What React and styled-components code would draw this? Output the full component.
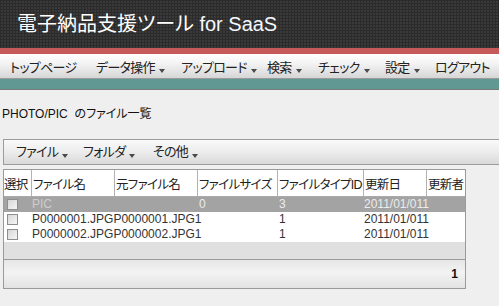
import React from "react";
import styled, { createGlobalStyle } from "styled-components";

const Global = createGlobalStyle`
  html, body { margin: 0; padding: 0; }
  body {
    background: #efefef;
    overflow: hidden;
    font-family: "Liberation Sans", "Noto Sans CJK JP", sans-serif;
    font-feature-settings: "palt";
    color: #222;
  }
`;

const Page = styled.div`
  width: 499px;
  height: 306px;
  overflow: hidden;
`;

const Header = styled.header`
  height: 48px;
  box-sizing: border-box;
  padding: 9px 0 0 17px;
  background-color: #3a3a3a;
  background-image:
    linear-gradient(#2b2b2b 1px, transparent 1px),
    linear-gradient(90deg, #2b2b2b 1px, transparent 1px);
  background-size: 3px 3px;
`;

const Title = styled.h1`
  margin: 0;
  font-weight: normal;
  font-size: 20px;
  line-height: 30px;
  color: #fff;
`;

const Latin = styled.span`
  font-family: "Liberation Sans", Arial, sans-serif;
  color: #f4f8ff;
`;

const Stripe = styled.div`
  height: ${(p) => p.$h}px;
  background: ${(p) => p.$color};
  border-bottom: ${(p) => (p.$bottom ? `1px solid ${p.$bottom}` : "none")};
`;

const Nav = styled.nav`
  display: flex;
  align-items: center;
  height: 25px;
  box-sizing: border-box;
  padding: 3px 0 0 10px;
  background: linear-gradient(#ffffff, #f3f3f3 40%, #d6d6d6);
  border-bottom: 1px solid #9a9a9a;
`;

const NavItem = styled.div`
  display: flex;
  align-items: center;
  flex: none;
  width: ${(p) => (p.$w ? `${p.$w}px` : "auto")};
  font-size: 13px;
  line-height: 16px;
  letter-spacing: -0.7px;
  color: #222;
  white-space: nowrap;
`;

const Arrow = styled.span`
  display: inline-block;
  width: 0;
  height: 0;
  margin: 7px 0 0 4px;
  border-left: 3.5px solid transparent;
  border-right: 3.5px solid transparent;
  border-top: 4px solid #4a4a4a;
`;

const Content = styled.main`
  padding: 0 0 0 2px;
`;

const PageTitle = styled.div`
  margin-top: 16px;
  font-size: 12px;
  line-height: 16px;
  color: #111;
`;

const Toolbar = styled.div`
  display: flex;
  align-items: center;
  margin: 17px 0 0 1px;
  width: 520px;
  height: 26px;
  box-sizing: border-box;
  padding: 0 0 0 12px;
  border: 1px solid #9c9c9c;
  border-right: none;
  background: linear-gradient(#fafafa, #ececec 50%, #d9d9d9);
`;

const ToolItem = styled(NavItem)`
  color: #222;
`;

const Grid = styled.div`
  margin: 4px 0 0 1px;
  width: 463px;
  box-sizing: border-box;
  border: 1px solid #9a9a9a;
  background: #e0e0e0;
`;

const cols = "28px 83px 83px 80px 86px 63px 38px";

const HeaderRow = styled.div`
  display: grid;
  grid-template-columns: ${cols};
  height: 26px;
  border-bottom: 1px solid #aaaaaa;
  background: #fff;
`;

const HeaderCell = styled.div`
  display: flex;
  align-items: center;
  box-sizing: border-box;
  padding-left: ${(p) => p.$pad ?? 1}px;
  border-right: ${(p) => (p.$last ? "none" : "1px solid #b2b2b2")};
  font-size: 12.5px;
  letter-spacing: -0.7px;
  color: #222;
  white-space: nowrap;
  overflow: hidden;
`;

const Body = styled.div`
  height: 62px;
`;

const Row = styled.div`
  display: grid;
  grid-template-columns: ${cols};
  height: 15px;
  align-items: center;
  font-size: 12px;
  line-height: 15px;
  background: ${(p) => (p.$folder ? "#a3a3a3" : "#ffffff")};
  color: ${(p) => (p.$folder ? "#ececec" : "#333")};
`;

const Cell = styled.div`
  padding-left: ${(p) => p.$pad ?? 1}px;
  white-space: nowrap;
  grid-column: ${(p) => (p.$span ? `span ${p.$span}` : "auto")};
  color: ${(p) => p.$color || "inherit"};
`;

const Check = styled.span`
  display: block;
  width: 11px;
  height: 11px;
  margin-left: 2px;
  box-sizing: border-box;
  border: 1px solid #8e8e8e;
  background: linear-gradient(135deg, #d6d6d6, #f7f7f7);
`;

const Pager = styled.div`
  display: flex;
  align-items: center;
  justify-content: flex-end;
  height: 28px;
  padding-right: 7px;
  border-top: 1px solid #9a9a9a;
  background: linear-gradient(#e6e6e6, #f3f3f3 45%, #e2e2e2);
  font-size: 12px;
  font-weight: bold;
  color: #111;
`;

const navItems = [
  { label: "トップページ", w: 86 },
  { label: "データ操作", w: 85, menu: true },
  { label: "アップロード", w: 86, menu: true },
  { label: "検索", w: 51, menu: true },
  { label: "チェック", w: 67, menu: true },
  { label: "設定", w: 50, menu: true },
  { label: "ログアウト" },
];

const toolItems = [
  { label: "ファイル", w: 67 },
  { label: "フォルダ", w: 70 },
  { label: "その他" },
];

const headers = ["選択", "ファイル名", "元ファイル名", "ファイルサイズ", "ファイルタイプID", "更新日", "更新者"];

const files = [
  { name: "P0000001.JPG", orig: "P0000001.JPG", size: "1", type: "1", date: "2011/01/011" },
  { name: "P0000002.JPG", orig: "P0000002.JPG", size: "1", type: "1", date: "2011/01/011" },
];

export default function App() {
  return (
    <Page>
      <Global />
      <Header>
        <Title>
          電子納品支援ツール <Latin>for SaaS</Latin>
        </Title>
      </Header>
      <Stripe $h={6} $color="#c65a5a" />
      <Nav>
        {navItems.map((n) => (
          <NavItem key={n.label} $w={n.w}>
            {n.label}
            {n.menu && <Arrow />}
          </NavItem>
        ))}
      </Nav>
      <Stripe $h={10} $color="#629893" $bottom="#7a7a7a" />
      <Content>
        <PageTitle>PHOTO/PIC&nbsp; のファイル一覧</PageTitle>
        <Toolbar>
          {toolItems.map((t) => (
            <ToolItem key={t.label} $w={t.w}>
              {t.label}
              <Arrow />
            </ToolItem>
          ))}
        </Toolbar>
        <Grid>
          <HeaderRow>
            {headers.map((h, i) => (
              <HeaderCell key={h} $pad={i === 0 ? 0 : 1} $last={i === headers.length - 1}>
                {h}
              </HeaderCell>
            ))}
          </HeaderRow>
          <Body>
            <Row $folder>
              <Cell><Check /></Cell>
              <Cell $pad={0} $span={2} $color="#cdcdcd">PIC</Cell>
              <Cell>0</Cell>
              <Cell>3</Cell>
              <Cell $pad={0}>2011/01/011</Cell>
              <Cell />
            </Row>
            {files.map((f) => (
              <Row key={f.name}>
                <Cell><Check /></Cell>
                <Cell $pad={0} $span={3}>
                  {f.name}
                  {f.orig}
                  {f.size}
                </Cell>
                <Cell>{f.type}</Cell>
                <Cell $pad={0}>{f.date}</Cell>
                <Cell />
              </Row>
            ))}
          </Body>
          <Pager>1</Pager>
        </Grid>
      </Content>
    </Page>
  );
}
